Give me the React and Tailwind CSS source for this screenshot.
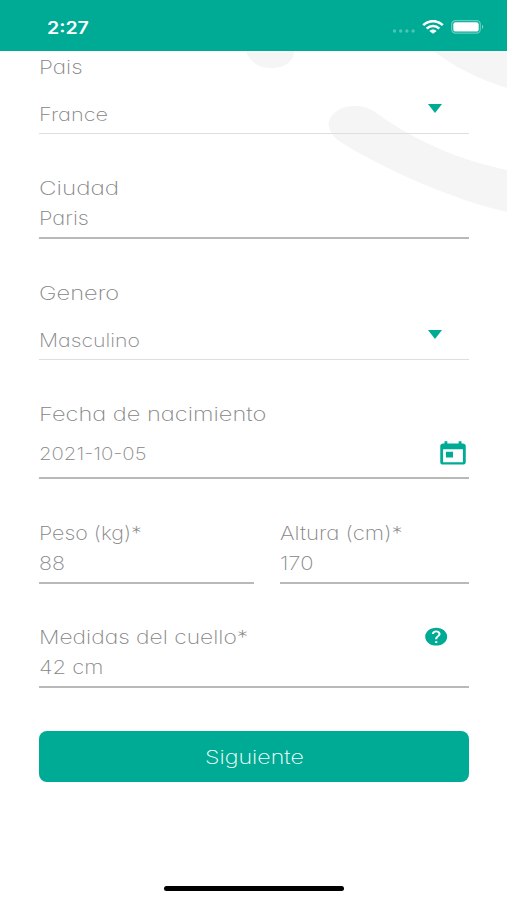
import React from 'react';
import { MdHelp, MdToday } from 'react-icons/md';

// Wide light text used for labels and values
const WideText = ({ children, className = '' }) => (
  <span className={`block w-max origin-left whitespace-nowrap leading-6 font-[250] ${className}`}>
    {children}
  </span>
);

const Caret = () => (
  <svg className="mr-[27px] h-[9px] w-[14px] shrink-0" viewBox="0 0 14 9" fill="#00ab95">
    <path d="M0 0h14L7 9z" />
  </svg>
);

// Select field
const SelectField = ({ label, value, labelClass, valueClass, className = '' }) => (
  <div className={`flex h-[78px] flex-col border-b border-[#dedede] ${className}`}>
    <WideText className={`text-[19px] ${labelClass}`}>{label}</WideText>
    <div className="mt-[23px] flex h-6 items-center justify-between">
      <WideText className={`text-[18px] ${valueClass}`}>{value}</WideText>
      <div className="-mt-3.5">
        <Caret />
      </div>
    </div>
  </div>
);

// Text field
const TextField = ({ label, value, labelClass, valueClass, icon, className = '' }) => (
  <div className={`flex h-[62px] flex-col border-b-2 border-[#b9b9b9] ${className}`}>
    <div className="flex h-6 items-center justify-between">
      <WideText className={`text-[19px] ${labelClass}`}>{label}</WideText>
      {icon}
    </div>
    <WideText className={`mt-1.5 text-[19px] ${valueClass}`}>{value}</WideText>
  </div>
);

const StatusBar = () => (
  <header className="relative flex h-[51px] items-center justify-between bg-[#00ab95] pl-[47px] pr-[23px]">
    <span className="mt-1.5 origin-left scale-x-[1.15] text-[17px] font-semibold text-white">2:27</span>
    <div className="mt-[3px] flex items-center">
      <svg className="mt-2 h-[4px] w-[24px]" viewBox="0 0 24 4" fill="#fff" fillOpacity="0.3">
        <circle cx="2.5" cy="2" r="1.7" />
        <circle cx="8.7" cy="2" r="1.7" />
        <circle cx="14.9" cy="2" r="1.7" />
        <circle cx="21.1" cy="2" r="1.7" />
      </svg>
      <svg className="ml-1.5 h-[14px] w-[22px]" viewBox="0 0 22 14" fill="none" stroke="#fff" strokeWidth="2.6">
        <path d="M1.2 5.2C6.6-.2 15.4-.2 20.8 5.2" />
        <path d="M4.7 8.6c3.6-3.4 9-3.4 12.6 0" />
        <path d="M7.4 11c2.1-2 5.1-2 7.2 0L11 13.8z" fill="#fff" stroke="none" />
      </svg>
      <svg className="ml-[7px] h-[14px] w-[33px]" viewBox="0 0 33 14">
        <rect x="0.7" y="0.7" width="28.6" height="12.4" rx="3.6" fill="none" stroke="#fff" strokeOpacity="0.4" strokeWidth="1.2" />
        <rect x="2.3" y="2.2" width="25.4" height="9.4" rx="2.2" fill="#fff" />
        <path d="M31 4.8c1.6.6 1.6 3.6 0 4.2z" fill="#fff" fillOpacity="0.5" />
      </svg>
    </div>
  </header>
);

export default function App() {
  return (
    <div className="relative flex h-[900px] w-[507px] flex-col overflow-hidden bg-white font-['Inter',sans-serif] text-[#868686] [font-feature-settings:'cv11']">
      {/* Background arcs */}
      <svg className="absolute left-0 top-0 h-[230px] w-[507px]" viewBox="0 0 507 230" fill="#f5f5f5">
        <path d="M246 51C250 63 260 68 271 68C284 68 294 62 294 51z" />
        <path d="M433 51C455 67 480 80 507 88V51z" />
        <path d="M328.500 124C330 113 341 106 355 106C363 106 369 108 375 112C416 142 460 160 507 170V212C456 200 395 175 342 143C334 138 329 131 328.500 124z" />
      </svg>

      <StatusBar />

      <main className="relative flex flex-1 flex-col pl-[39px] pr-[38px]">
        <SelectField
          className="mt-[5px]"
          label="Pais"
          value="France"
          labelClass="scale-x-[1.185]"
          valueClass="scale-x-[1.21]"
        />

        <TextField
          className="mt-[43px]"
          label="Ciudad"
          value="Paris"
          labelClass="scale-x-[1.275]"
          valueClass="scale-x-[1.15]"
        />

        <SelectField
          className="mt-[43px]"
          label="Genero"
          value="Masculino"
          labelClass="scale-x-[1.245]"
          valueClass="scale-x-[1.182]"
        />

        {/* Date of birth */}
        <div className="mt-[43px] flex h-[76px] flex-col border-b-2 border-[#b9b9b9]">
          <WideText className="text-[19px] scale-x-[1.242]">Fecha de nacimiento</WideText>
          <div className="mt-[15px] flex h-6 items-center justify-between">
            <WideText className="text-[17.5px] scale-x-[1.163]">2021-10-05</WideText>
            <MdToday className="-mr-px h-[28px] w-[34px] shrink-0 text-[#00ab95]" preserveAspectRatio="none" />
          </div>
        </div>

        <div className="mt-[43px] flex gap-[26px]">
          <TextField
            className="w-[215px]"
            label="Peso (kg)*"
            value="88"
            labelClass="scale-x-[1.127]"
            valueClass="scale-x-[1.13]"
          />
          <TextField
            className="flex-1"
            label="Altura (cm)*"
            value="170"
            labelClass="scale-x-[1.168]"
            valueClass="scale-x-[1.155]"
          />
        </div>

        <TextField
          className="mt-[42px]"
          label="Medidas del cuello*"
          value="42 cm"
          labelClass="scale-x-[1.2]"
          valueClass="scale-x-[1.16]"
          icon={<MdHelp className="-mt-0.5 mr-5 h-[21.4px] w-[26.4px] shrink-0 text-[#00ab95]" preserveAspectRatio="none" />}
        />

        <button
          type="button"
          className="mt-[43px] flex h-[51px] items-center justify-center rounded-lg bg-[#00ab95] pt-[3px] text-[19px] font-[250] text-white"
        >
          <span className="scale-x-[1.223]">Siguiente</span>
        </button>
      </main>

      {/* Home indicator */}
      <div className="mb-[9px] h-[5px] w-[180px] self-center rounded-full bg-black" />
    </div>
  );
}
